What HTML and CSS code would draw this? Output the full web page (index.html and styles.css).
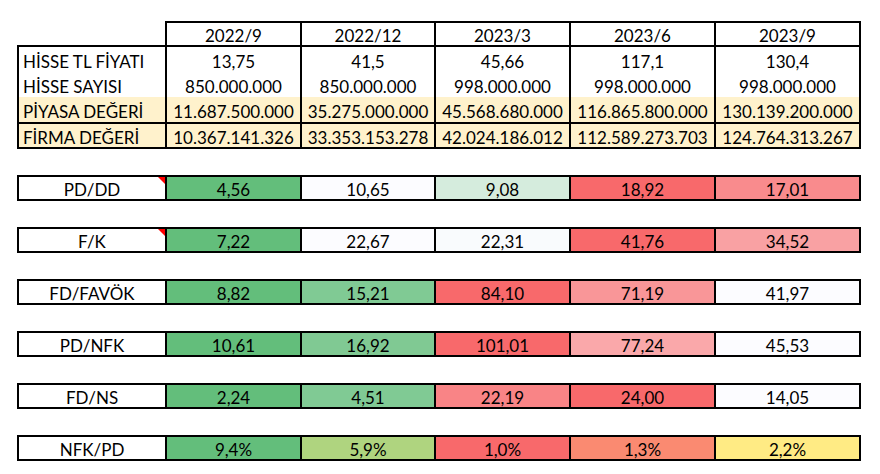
FILE: index.html
```html
<!DOCTYPE html>
<html lang="tr">
<head>
<meta charset="utf-8">
<title>Değerleme Tablosu</title>
<link rel="stylesheet" href="styles.css">
</head>
<body>
<div class="sheet">
  <div class="head">
    <div class="cell">2022/9</div>
    <div class="cell">2022/12</div>
    <div class="cell">2023/3</div>
    <div class="cell">2023/6</div>
    <div class="cell">2023/9</div>
  </div>
  <div class="data">
    <div class="block block-main">
      <div class="cell label">HİSSE TL FİYATI</div>
      <div class="cell">13,75</div>
      <div class="cell">41,5</div>
      <div class="cell">45,66</div>
      <div class="cell">117,1</div>
      <div class="cell">130,4</div>
      <div class="cell label">HİSSE SAYISI</div>
      <div class="cell">850.000.000</div>
      <div class="cell">850.000.000</div>
      <div class="cell">998.000.000</div>
      <div class="cell">998.000.000</div>
      <div class="cell">998.000.000</div>
      <div class="cell label beige">PİYASA DEĞERİ</div>
      <div class="cell beige">11.687.500.000</div>
      <div class="cell beige">35.275.000.000</div>
      <div class="cell beige">45.568.680.000</div>
      <div class="cell beige">116.865.800.000</div>
      <div class="cell beige">130.139.200.000</div>
    </div>
    <div class="block block-firm">
      <div class="cell label beige">FİRMA DEĞERİ</div>
      <div class="cell beige">10.367.141.326</div>
      <div class="cell beige">33.353.153.278</div>
      <div class="cell beige">42.024.186.012</div>
      <div class="cell beige">112.589.273.703</div>
      <div class="cell beige">124.764.313.267</div>
    </div>
  </div>

  <div class="ratios">
    <div class="band">
      <div class="cell name note">PD/DD</div>
      <div class="cell" style="background:#63BE7B">4,56</div>
      <div class="cell" style="background:#FCFCFF">10,65</div>
      <div class="cell" style="background:#D5ECDD">9,08</div>
      <div class="cell" style="background:#F8696B">18,92</div>
      <div class="cell" style="background:#F98B8D">17,01</div>
    </div>
    <div class="band">
      <div class="cell name note">F/K</div>
      <div class="cell" style="background:#63BE7B">7,22</div>
      <div class="cell" style="background:#FCFCFF">22,67</div>
      <div class="cell" style="background:#F9FBFD">22,31</div>
      <div class="cell" style="background:#F8696B">41,76</div>
      <div class="cell" style="background:#F9A1A3">34,52</div>
    </div>
    <div class="band">
      <div class="cell name">FD/FAVÖK</div>
      <div class="cell" style="background:#63BE7B">8,82</div>
      <div class="cell" style="background:#80CA94">15,21</div>
      <div class="cell" style="background:#F8696B">84,10</div>
      <div class="cell" style="background:#F99698">71,19</div>
      <div class="cell" style="background:#FCFCFF">41,97</div>
    </div>
    <div class="band">
      <div class="cell name">PD/NFK</div>
      <div class="cell" style="background:#63BE7B">10,61</div>
      <div class="cell" style="background:#80C993">16,92</div>
      <div class="cell" style="background:#F8696B">101,01</div>
      <div class="cell" style="background:#FAA8AA">77,24</div>
      <div class="cell" style="background:#FCFCFF">45,53</div>
    </div>
    <div class="band">
      <div class="cell name">FD/NS</div>
      <div class="cell" style="background:#63BE7B">2,24</div>
      <div class="cell" style="background:#80CA94">4,51</div>
      <div class="cell" style="background:#F98486">22,19</div>
      <div class="cell" style="background:#F8696B">24,00</div>
      <div class="cell" style="background:#FCFCFF">14,05</div>
    </div>
    <div class="band">
      <div class="cell name">NFK/PD</div>
      <div class="cell" style="background:#63BE7B">9,4%</div>
      <div class="cell" style="background:#AFD47F">5,9%</div>
      <div class="cell" style="background:#F8696B">1,0%</div>
      <div class="cell" style="background:#FA8A71">1,3%</div>
      <div class="cell" style="background:#FFEB84">2,2%</div>
    </div>
  </div>
</div>
</body>
</html>
```

FILE: styles.css
```css
html, body {
  margin: 0;
  padding: 0;
  background: #fff;
}

body {
  font-family: Lato, "Liberation Sans", sans-serif;
  font-size: 17px;
  color: #000;
}

.sheet {
  padding: 21px 0 0 17px;
  width: 844px;
}

.cell {
  background: #fff;
  display: flex;
  align-items: center;
  justify-content: center;
  white-space: nowrap;
  line-height: 1;
  padding-top: 3px;
  box-sizing: border-box;
}

.label {
  justify-content: flex-start;
  padding-left: 4px;
}

.beige {
  background: #FFF2CC;
}

/* header row */
.head {
  margin-left: 148px;
  background: #000;
  padding: 2px 2px 0 2px;
  display: grid;
  grid-template-columns: 133px 132px 133px 143px 143px;
  grid-template-rows: 22px;
  column-gap: 2px;
}

/* data block */
.data {
  background: #000;
  padding: 2px;
  display: flex;
  flex-direction: column;
  gap: 2px;
}

.block {
  display: grid;
  grid-template-columns: 146px 133px 132px 133px 143px 143px;
  column-gap: 2px;
  background: #000;
}

.block-main {
  grid-template-rows: 25px 25px 25px;
}

.block-firm {
  grid-template-rows: 23px;
}

/* ratio bands */
.ratios {
  margin-top: 26px;
  display: flex;
  flex-direction: column;
  gap: 26px;
}

.band {
  background: #000;
  padding: 2px;
  display: grid;
  grid-template-columns: 146px 133px 132px 133px 143px 143px;
  grid-template-rows: 22px;
  column-gap: 2px;
}

.name {
  position: relative;
}

.note::after {
  content: "";
  position: absolute;
  top: 0;
  right: 0;
  width: 0;
  height: 0;
  border-top: 7px solid #FF0000;
  border-left: 7px solid transparent;
}
```
